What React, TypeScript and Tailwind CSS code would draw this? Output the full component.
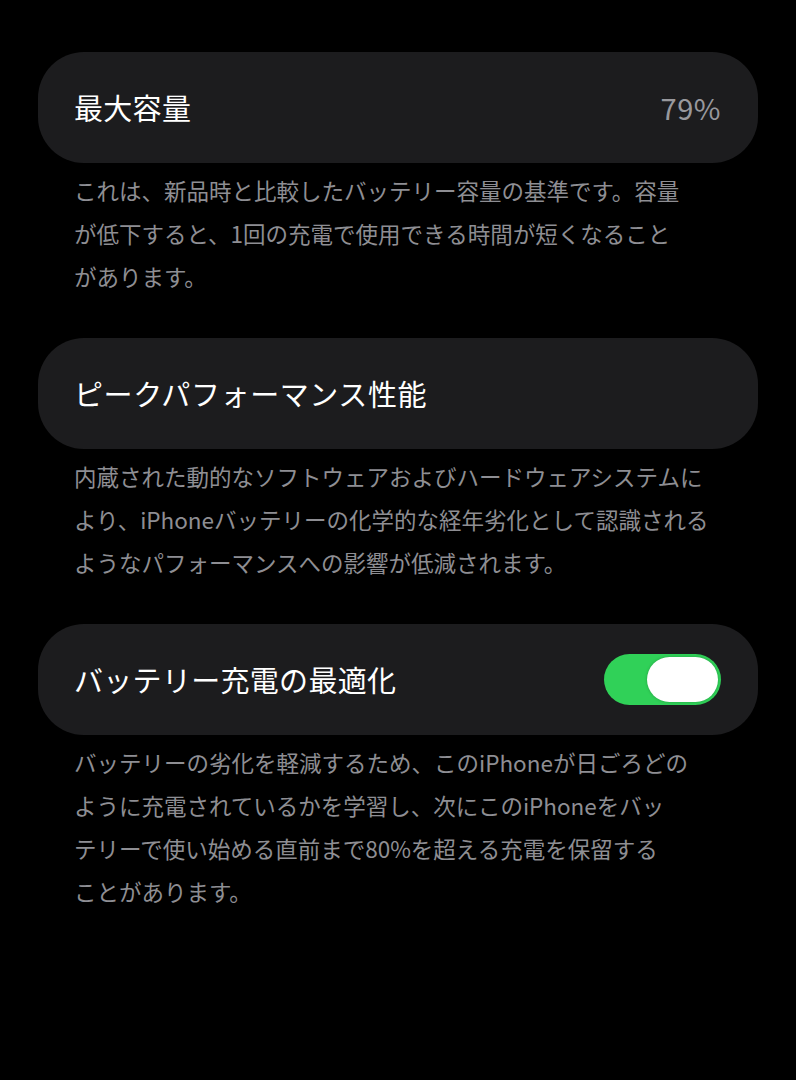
import { useState } from "react";

const font = {
  fontFamily: '"Noto Sans CJK JP", "Noto Sans", sans-serif',
};

function Footer({ lines }: { lines: string[] }) {
  return (
    <div className="pl-[36px] pr-[38px] pt-[6px] pb-[40px] text-[22.5px] leading-[43px] text-[#8e8e93]">
      {lines.map((line, i) => (
        <div key={i} className="whitespace-nowrap">
          {line}
        </div>
      ))}
    </div>
  );
}

function Card({ children }: { children: React.ReactNode }) {
  return (
    <div className="h-[111px] rounded-[46px] bg-[#1c1c1e] pl-[36px] pr-[37px] flex items-center justify-between">
      {children}
    </div>
  );
}

function Toggle() {
  const [on, setOn] = useState(true);
  return (
    <button
      onClick={() => setOn(!on)}
      className={`relative w-[117px] h-[51px] rounded-full transition-colors ${
        on ? "bg-[#30d158]" : "bg-[#39393d]"
      }`}
    >
      <span
        className={`absolute top-[3px] h-[45px] w-[71px] rounded-full bg-white shadow-[0_0_3px_rgba(0,0,0,0.25)] transition-all ${
          on ? "right-[3px]" : "left-[3px]"
        }`}
      />
    </button>
  );
}

export default function App() {
  return (
    <div
      className="min-h-[1080px] w-full bg-black px-[38px] pt-[52px]"
      style={font}
    >
      {/* 最大容量 */}
      <Card>
        <span className="text-[29px] tracking-[0.3px] text-white">最大容量</span>
        <span className="text-[29px] tracking-[0.5px] text-[#98989d]">79%</span>
      </Card>
      <Footer
        lines={[
          "これは、新品時と比較したバッテリー容量の基準です。容量",
          "が低下すると、1回の充電で使用できる時間が短くなること",
          "があります。",
        ]}
      />

      {/* ピークパフォーマンス性能 */}
      <Card>
        <span className="text-[29px] tracking-[0.6px] text-white">
          ピークパフォーマンス性能
        </span>
      </Card>
      <Footer
        lines={[
          "内蔵された動的なソフトウェアおよびハードウェアシステムに",
          "より、iPhoneバッテリーの化学的な経年劣化として認識される",
          "ようなパフォーマンスへの影響が低減されます。",
        ]}
      />

      {/* バッテリー充電の最適化 */}
      <Card>
        <span className="text-[29px] tracking-[0.3px] text-white">
          バッテリー充電の最適化
        </span>
        <Toggle />
      </Card>
      <Footer
        lines={[
          "バッテリーの劣化を軽減するため、このiPhoneが日ごろどの",
          "ように充電されているかを学習し、次にこのiPhoneをバッ",
          "テリーで使い始める直前まで80%を超える充電を保留する",
          "ことがあります。",
        ]}
      />
    </div>
  );
}
